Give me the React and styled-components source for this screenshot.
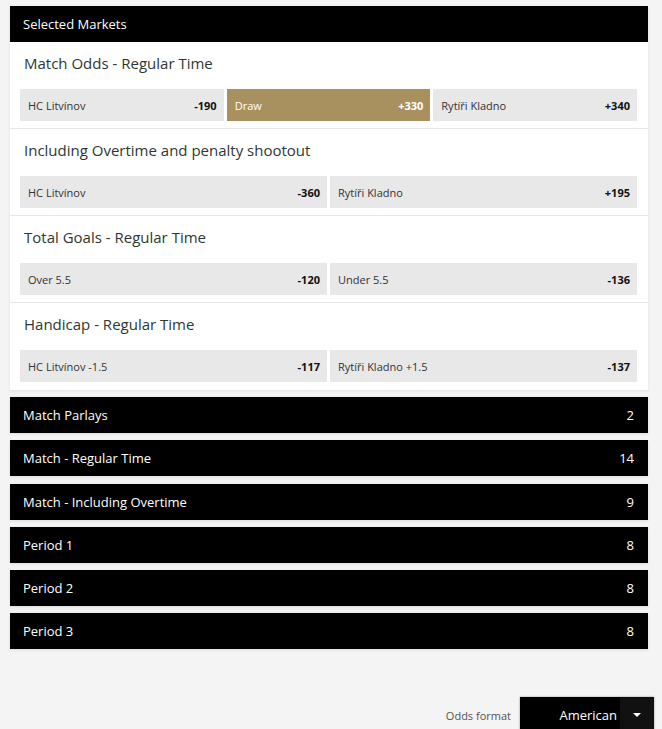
import React from 'react';
import styled, { createGlobalStyle } from 'styled-components';

const GlobalStyle = createGlobalStyle`
  body {
    margin: 0;
    background: #f4f4f4;
    font-family: 'Open Sans', 'Liberation Sans', sans-serif;
  }
`;

const Page = styled.div`
  padding: 6px 8px 0 10px;
  height: 729px;
  box-sizing: border-box;
  overflow: hidden;
`;

const Column = styled.div`
  display: flex;
  flex-direction: column;
  gap: 7.2px;
  margin-right: 6px;
`;

const Panel = styled.div`
  background: #fff;
  box-shadow: 0 1px 3px rgba(0, 0, 0, 0.08);
`;

const Bar = styled.div`
  display: flex;
  align-items: center;
  justify-content: space-between;
  height: 36px;
  padding: 0 14px 0 13px;
  background: #000;
  color: #fff;
  font-size: 13px;
  font-weight: 500;
  box-shadow: 0 1px 3px rgba(0, 0, 0, 0.1);
`;

const Count = styled.span`
  font-weight: 400;
  font-size: 13px;
`;

const Market = styled.div`
  padding: 11px 11px 7px 10px;
  border-bottom: 1px solid #e6e6e6;
  &:last-child {
    border-bottom: none;
    padding-bottom: 8px;
  }
`;

const MarketTitle = styled.div`
  height: 20px;
  line-height: 20px;
  padding-left: 4px;
  margin-bottom: 16px;
  font-size: 15px;
  color: #2e3831;
`;

const OddsRow = styled.div`
  display: grid;
  grid-template-columns: repeat(${(p) => p.cols}, 1fr);
  gap: 3px;
`;

const OddsButton = styled.div`
  display: flex;
  align-items: center;
  justify-content: space-between;
  height: 32px;
  padding: 0 7px 0 8px;
  background: ${(p) => (p.selected ? '#a8915e' : '#e8e8e8')};
  color: ${(p) => (p.selected ? '#fff' : '#333')};
  font-size: 11px;
`;

const Price = styled.span`
  font-weight: 700;
  color: ${(p) => (p.selected ? '#fff' : '#111')};
`;

const Footer = styled.div`
  display: flex;
  justify-content: flex-end;
  align-items: center;
  gap: 9px;
  margin-top: 48px;
`;

const FooterLabel = styled.span`
  font-size: 11px;
  color: #555;
`;

const Select = styled.div`
  display: flex;
  width: 134px;
  height: 36px;
  background: #000;
  color: #fff;
  box-shadow: 0 0 2px rgba(0, 0, 0, 0.4);
`;

const SelectValue = styled.div`
  flex: 1;
  display: flex;
  align-items: center;
  justify-content: flex-end;
  padding-right: 3px;
  font-size: 13px;
`;

const SelectArrow = styled.div`
  width: 34px;
  display: flex;
  align-items: center;
  justify-content: center;
  background: #111;
  &::after {
    content: '';
    border-left: 4px solid transparent;
    border-right: 4px solid transparent;
    border-top: 4px solid #fff;
  }
`;

const markets = [
  {
    title: 'Match Odds - Regular Time',
    odds: [
      { name: 'HC Litvínov', price: '-190' },
      { name: 'Draw', price: '+330', selected: true },
      { name: 'Rytíři Kladno', price: '+340' },
    ],
  },
  {
    title: 'Including Overtime and penalty shootout',
    odds: [
      { name: 'HC Litvínov', price: '-360' },
      { name: 'Rytíři Kladno', price: '+195' },
    ],
  },
  {
    title: 'Total Goals - Regular Time',
    odds: [
      { name: 'Over 5.5', price: '-120' },
      { name: 'Under 5.5', price: '-136' },
    ],
  },
  {
    title: 'Handicap - Regular Time',
    odds: [
      { name: 'HC Litvínov -1.5', price: '-117' },
      { name: 'Rytíři Kladno +1.5', price: '-137' },
    ],
  },
];

const groups = [
  { name: 'Match Parlays', count: 2 },
  { name: 'Match - Regular Time', count: 14 },
  { name: 'Match - Including Overtime', count: 9 },
  { name: 'Period 1', count: 8 },
  { name: 'Period 2', count: 8 },
  { name: 'Period 3', count: 8 },
];

const App = () => (
  <Page>
    <GlobalStyle />
    <Column>
      <div>
        <Bar>Selected Markets</Bar>
        <Panel>
          {markets.map((m) => (
            <Market key={m.title}>
              <MarketTitle>{m.title}</MarketTitle>
              <OddsRow cols={m.odds.length}>
                {m.odds.map((o) => (
                  <OddsButton key={o.name} selected={o.selected}>
                    <span>{o.name}</span>
                    <Price selected={o.selected}>{o.price}</Price>
                  </OddsButton>
                ))}
              </OddsRow>
            </Market>
          ))}
        </Panel>
      </div>
      {groups.map((g) => (
        <Bar key={g.name}>
          <span>{g.name}</span>
          <Count>{g.count}</Count>
        </Bar>
      ))}
    </Column>
    <Footer>
      <FooterLabel>Odds format</FooterLabel>
      <Select>
        <SelectValue>American</SelectValue>
        <SelectArrow />
      </Select>
    </Footer>
  </Page>
);

export default App;
